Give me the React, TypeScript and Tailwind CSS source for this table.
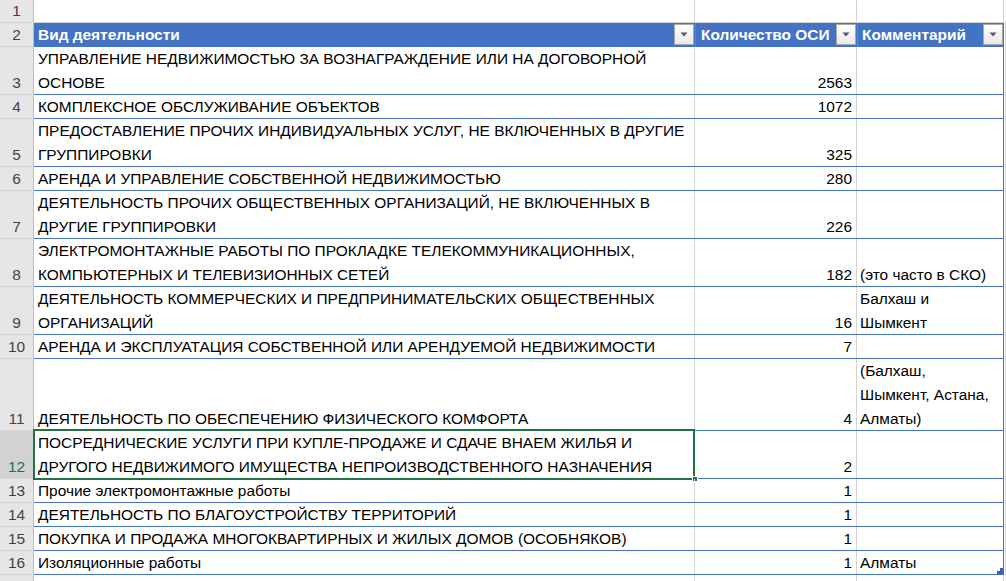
import React from 'react';

interface Row {
  n: number;
  lines: number;
  a: string[];
  b: string;
  c?: string[];
  selected?: boolean;
}

const rows: Row[] = [
  { n: 3, lines: 2, a: ['УПРАВЛЕНИЕ НЕДВИЖИМОСТЬЮ ЗА ВОЗНАГРАЖДЕНИЕ ИЛИ НА ДОГОВОРНОЙ', 'ОСНОВЕ'], b: '2563' },
  { n: 4, lines: 1, a: ['КОМПЛЕКСНОЕ ОБСЛУЖИВАНИЕ ОБЪЕКТОВ'], b: '1072' },
  { n: 5, lines: 2, a: ['ПРЕДОСТАВЛЕНИЕ ПРОЧИХ ИНДИВИДУАЛЬНЫХ УСЛУГ, НЕ ВКЛЮЧЕННЫХ В ДРУГИЕ', 'ГРУППИРОВКИ'], b: '325' },
  { n: 6, lines: 1, a: ['АРЕНДА И УПРАВЛЕНИЕ СОБСТВЕННОЙ НЕДВИЖИМОСТЬЮ'], b: '280' },
  { n: 7, lines: 2, a: ['ДЕЯТЕЛЬНОСТЬ ПРОЧИХ ОБЩЕСТВЕННЫХ ОРГАНИЗАЦИЙ, НЕ ВКЛЮЧЕННЫХ В', 'ДРУГИЕ ГРУППИРОВКИ'], b: '226' },
  { n: 8, lines: 2, a: ['ЭЛЕКТРОМОНТАЖНЫЕ РАБОТЫ ПО ПРОКЛАДКЕ ТЕЛЕКОММУНИКАЦИОННЫХ,', 'КОМПЬЮТЕРНЫХ И ТЕЛЕВИЗИОННЫХ СЕТЕЙ'], b: '182', c: ['(это часто в СКО)'] },
  { n: 9, lines: 2, a: ['ДЕЯТЕЛЬНОСТЬ КОММЕРЧЕСКИХ И ПРЕДПРИНИМАТЕЛЬСКИХ ОБЩЕСТВЕННЫХ', 'ОРГАНИЗАЦИЙ'], b: '16', c: ['Балхаш и', 'Шымкент'] },
  { n: 10, lines: 1, a: ['АРЕНДА И ЭКСПЛУАТАЦИЯ СОБСТВЕННОЙ ИЛИ АРЕНДУЕМОЙ НЕДВИЖИМОСТИ'], b: '7' },
  { n: 11, lines: 3, a: ['ДЕЯТЕЛЬНОСТЬ ПО ОБЕСПЕЧЕНИЮ ФИЗИЧЕСКОГО КОМФОРТА'], b: '4', c: ['(Балхаш,', 'Шымкент, Астана,', 'Алматы)'] },
  { n: 12, lines: 2, a: ['ПОСРЕДНИЧЕСКИЕ УСЛУГИ ПРИ КУПЛЕ-ПРОДАЖЕ И СДАЧЕ ВНАЕМ ЖИЛЬЯ И', 'ДРУГОГО НЕДВИЖИМОГО ИМУЩЕСТВА НЕПРОИЗВОДСТВЕННОГО НАЗНАЧЕНИЯ'], b: '2', selected: true },
  { n: 13, lines: 1, a: ['Прочие электромонтажные работы'], b: '1' },
  { n: 14, lines: 1, a: ['ДЕЯТЕЛЬНОСТЬ ПО БЛАГОУСТРОЙСТВУ ТЕРРИТОРИЙ'], b: '1' },
  { n: 15, lines: 1, a: ['ПОКУПКА И ПРОДАЖА МНОГОКВАРТИРНЫХ И ЖИЛЫХ ДОМОВ (ОСОБНЯКОВ)'], b: '1' },
  { n: 16, lines: 1, a: ['Изоляционные работы'], b: '1', c: ['Алматы'] },
];

const heights: Record<number, string> = { 1: 'h-[24px]', 2: 'h-[48px]', 3: 'h-[72px]' };

function FilterButton() {
  return (
    <div className="absolute right-[1px] top-[1px] w-[20px] h-[21px] border border-[#a9a9a9] bg-gradient-to-b from-[#ffffff] to-[#e9e9e9] flex items-center justify-center">
      <svg width="8" height="5" viewBox="0 0 8 5">
        <path d="M0.5 0.5 L7.5 0.5 L4 4.5 Z" fill="#595959" />
      </svg>
    </div>
  );
}

function Lines({ lines }: { lines: string[] }) {
  return (
    <div className="flex flex-col justify-end h-full">
      {lines.map((l, i) => (
        <div key={i} className="h-[24px] pt-[1px] leading-[24px] whitespace-nowrap">
          {l}
        </div>
      ))}
    </div>
  );
}

export default function App() {
  return (
    <div
      className="w-[1006px] h-[581px] overflow-hidden bg-white text-[15.45px] text-black"
      style={{ fontFamily: '"Liberation Sans", Arial, sans-serif' }}
    >
      {/* row 1 */}
      <div className="flex h-[23px] border-b border-[#d4d4d4]">
        <div className="w-[34px] shrink-0 bg-[#e6e6e6] border-r border-[#bdbdbd] flex items-end justify-center text-[#444] leading-[22px]">
          1
        </div>
        <div className="w-[661px] shrink-0 border-r border-[#d4d4d4]" />
        <div className="w-[162px] shrink-0 border-r border-[#d4d4d4]" />
        <div className="w-[147px] shrink-0 border-r border-[#d4d4d4]" />
      </div>

      {/* row 2 header */}
      <div className="flex h-[24px]">
        <div className="w-[34px] shrink-0 bg-[#e6e6e6] border-r border-[#bdbdbd] border-b border-b-[#d4d4d4] flex items-end justify-center text-[#444] leading-[23px]">
          2
        </div>
        <div className="w-[970px] shrink-0 flex bg-[#4472c4] text-white font-bold">
          <div className="relative w-[661px] shrink-0 pl-[4px] leading-[24px]">
            Вид деятельности
            <FilterButton />
          </div>
          <div className="relative w-[162px] shrink-0 pl-[5px] leading-[24px] border-l border-[#5b83cc]">
            Количество ОСИ
            <FilterButton />
          </div>
          <div className="relative w-[147px] shrink-0 pl-[4px] leading-[24px] border-l border-[#5b83cc]">
            Комментарий
            <FilterButton />
          </div>
        </div>
        <div className="w-[2px] border-r border-[#d4d4d4]" />
      </div>

      {rows.map((r) => (
        <div key={r.n} className={`flex ${heights[r.lines]}`}>
          <div
            className={`w-[34px] shrink-0 border-r border-b border-r-[#bdbdbd] border-b-[#d4d4d4] flex flex-col justify-end items-center leading-[23px] ${
              r.selected ? 'bg-[#d2d2d2] text-[#217346]' : 'bg-[#e6e6e6] text-[#444]'
            }`}
          >
            {r.n}
          </div>
          <div className="w-[970px] shrink-0 flex border-b border-[#4472c4]">
            <div className="relative w-[661px] shrink-0 border-r border-[#d4d4d4] pl-[4px]">
              <Lines lines={r.a} />
              {r.selected && (
                <>
                  <div className="absolute -left-[1px] -top-[2px] -right-[1px] -bottom-[2px] border-2 border-[#217346]" />
                  <div className="absolute -right-[4px] -bottom-[4px] w-[6px] h-[6px] bg-[#217346] border border-white" />
                </>
              )}
            </div>
            <div className="w-[162px] shrink-0 border-r border-[#d4d4d4] pr-[4px] text-right">
              <Lines lines={[r.b]} />
            </div>
            <div className="relative w-[147px] shrink-0 border-r border-[#4472c4] pl-[3px]">
              <Lines lines={r.c || []} />
              {r.n === 16 && (
                <svg className="absolute right-[0px] bottom-[0px]" width="6" height="6" viewBox="0 0 6 6">
                  <path d="M3 0 H6 V6 H0 V3 H3 Z" fill="#3f5fbf" />
                </svg>
              )}
            </div>
          </div>
          <div className="w-[2px] border-r border-[#d4d4d4]" />
        </div>
      ))}

      {/* row 17 */}
      <div className="flex h-[24px]">
        <div className="w-[34px] shrink-0 bg-[#e6e6e6] border-r border-[#bdbdbd]" />
        <div className="w-[661px] shrink-0 border-r border-[#d4d4d4]" />
        <div className="w-[162px] shrink-0 border-r border-[#d4d4d4]" />
        <div className="w-[147px] shrink-0 border-r border-[#d4d4d4]" />
      </div>
    </div>
  );
}
